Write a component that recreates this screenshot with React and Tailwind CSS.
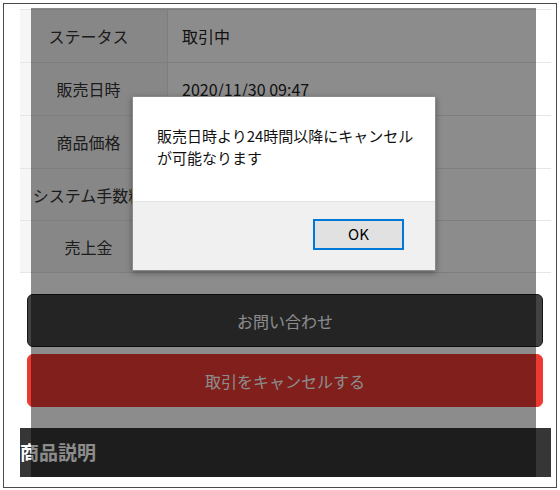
import React from 'react';

const rows = [
  { label: 'ステータス', value: '取引中', h: 'h-[53px]' },
  { label: '販売日時', value: '2020/11/30 09:47', h: 'h-[53px]' },
  { label: '商品価格', value: '', h: 'h-[53px]' },
  { label: 'システム手数料', value: '', h: 'h-[52px]' },
  { label: '売上金', value: '', h: 'h-[52px]' },
];

const App = () => {
  return (
    <div
      className="w-[560px] h-[490px] bg-white p-[3px]"
      style={{ fontFamily: '"Noto Sans CJK JP", "Noto Sans", sans-serif' }}
    >
      <div className="relative h-[485px] border border-[#4a4a4a] overflow-hidden bg-white">
        {/* Page content */}
        <div className="pt-[5px]">
          {/* Detail table */}
          <div className="ml-[16px] w-[531px] border-t border-[#e6e6e6]">
            {rows.map((row) => (
              <div key={row.label} className={`flex ${row.h} border-b border-[#e6e6e6]`}>
                <div className="w-[148px] shrink-0 bg-[#f6f6f6] border-r border-[#e6e6e6] flex items-center justify-center pr-[10px] whitespace-nowrap text-[16px] text-[#333]">
                  {row.label}
                </div>
                <div className="flex-1 flex items-center pl-[14px] text-[16px] text-[#222]">
                  {row.value}
                </div>
              </div>
            ))}
          </div>

          {/* Buttons */}
          <div className="ml-[23px] w-[516px] mt-[21px] flex flex-col gap-[7px]">
            <button className="h-[53px] rounded-[6px] bg-[#424242] border border-[#151515] text-white text-[16px]">
              お問い合わせ
            </button>
            <button className="h-[53px] rounded-[6px] bg-[#ea3a32] border border-[#ee3a2d] text-white text-[16px]">
              取引をキャンセルする
            </button>
          </div>

          {/* Section heading */}
          <div className="ml-[16px] w-[531px] mt-[21px] h-[49px] bg-[#363636] flex items-center">
            <span className="text-white font-bold text-[19px]">商品説明</span>
          </div>
        </div>

        {/* Modal backdrop */}
        <div className="absolute left-[27px] top-[4px] w-[505px] h-[469px] bg-black/45"></div>

        {/* Alert dialog */}
        <div className="absolute left-[128px] top-[92px] w-[304px] h-[175px] bg-white border border-[#8a8a8a] shadow-[0_2px_6px_rgba(0,0,0,0.35)] flex flex-col">
          <div className="h-[104px] pl-[24px] pt-[28px] text-[15px] leading-[22px] text-[#111] whitespace-nowrap">
            販売日時より24時間以降にキャンセル
            <br />
            が可能なります
          </div>
          <div className="flex-1 bg-[#f0f0f0] border-t border-[#e4e4e4] flex justify-end items-start pt-[17px] pr-[31px]">
            <button className="w-[91px] h-[31px] bg-[#e1e1e1] border-2 border-[#0078d7] text-[15px] text-black">
              OK
            </button>
          </div>
        </div>
      </div>
    </div>
  );
};

export default App;
